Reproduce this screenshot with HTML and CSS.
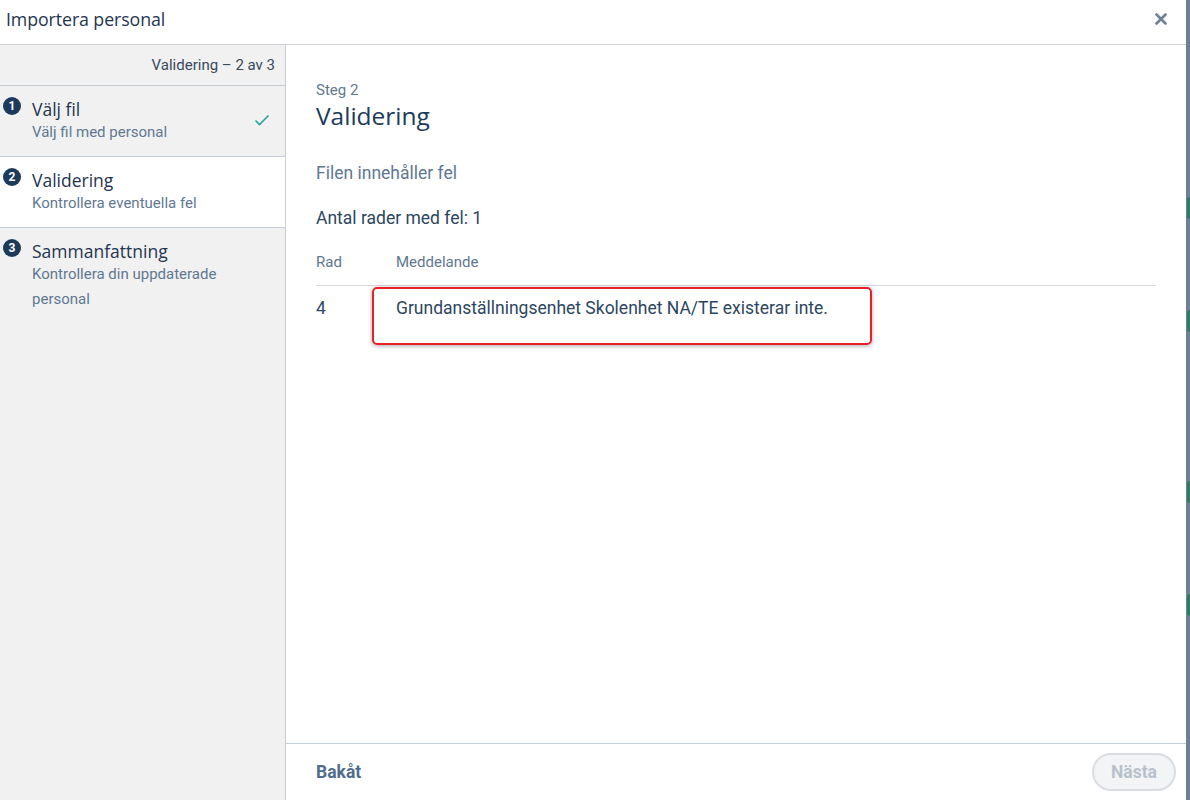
FILE: index.html
```html
<!DOCTYPE html>
<html lang="sv">
<head>
    <meta charset="UTF-8">
    <meta name="viewport" content="width=device-width, initial-scale=1.0">
    <title>Importera personal</title>
    <link rel="stylesheet" href="styles.css">
</head>
<body>
    <div class="backdrop">
        <span class="bit bit-1"></span>
        <span class="bit bit-2"></span>
        <span class="bit bit-3"></span>
        <span class="bit bit-4"></span>
    </div>

    <div class="dialog">
        <div class="dialog-head">
            <h1 class="dialog-title">Importera personal</h1>
            <span class="close">
                <svg width="12" height="12" viewBox="0 0 12 12">
                    <path d="M1.5 1.5 L10.5 10.5 M10.5 1.5 L1.5 10.5" stroke="#6c8199" stroke-width="2.6" stroke-linecap="round"/>
                </svg>
            </span>
        </div>

        <div class="dialog-body">
            <aside class="steps">
                <div class="steps-info">Validering &ndash; 2 av 3</div>

                <div class="step done">
                    <span class="num">1</span>
                    <div class="step-text">
                        <div class="step-title">Välj fil</div>
                        <div class="step-sub">Välj fil med personal</div>
                    </div>
                    <svg class="check" width="16" height="12" viewBox="0 0 16 12">
                        <path d="M1.5 6.5 L5.5 10.5 L14.5 1.5" fill="none" stroke="#2aa39a" stroke-width="1.6"/>
                    </svg>
                </div>
                <div class="step active">
                    <span class="num">2</span>
                    <div class="step-text">
                        <div class="step-title">Validering</div>
                        <div class="step-sub">Kontrollera eventuella fel</div>
                    </div>
                </div>
                <div class="step last">
                    <span class="num">3</span>
                    <div class="step-text">
                        <div class="step-title">Sammanfattning</div>
                        <div class="step-sub">Kontrollera din uppdaterade personal</div>
                    </div>
                </div>
            </aside>

            <main class="main">
                <div class="content">
                    <div class="kicker">Steg 2</div>
                    <h2 class="heading">Validering</h2>

                    <p class="status">Filen innehåller fel</p>
                    <p class="count">Antal rader med fel: 1</p>

                    <div class="errors">
                        <div class="errors-head">
                            <span class="col-row">Rad</span>
                            <span class="col-msg">Meddelande</span>
                        </div>
                        <div class="errors-row">
                            <span class="col-row">4</span>
                            <span class="col-msg">Grundanställningsenhet Skolenhet NA/TE existerar inte.</span>
                            <span class="mark"></span>
                        </div>
                    </div>
                </div>

                <div class="footer">
                    <span class="back">Bakåt</span>
                    <button class="next" disabled>Nästa</button>
                </div>
            </main>
        </div>
    </div>
</body>
</html>
```

FILE: styles.css
```css
html, body {
    margin: 0;
    height: 100%;
}
body {
    background: #6e8096;
    font-family: Roboto, "Liberation Sans", sans-serif;
    color: #2c4660;
    overflow: hidden;
    position: relative;
}
.backdrop .bit {
    position: absolute;
    right: 0;
    width: 3px;
    height: 22px;
    border-radius: 3px 0 0 3px;
    background: #2f7a66;
}
.bit-1 { top: 197px; }
.bit-2 { top: 310px; }
.bit-3 { top: 481px; }
.bit-4 { top: 594px; }

.dialog {
    width: 1186px;
    height: 800px;
    background: #fff;
    display: flex;
    flex-direction: column;
}
.dialog-head {
    height: 44px;
    border-bottom: 1px solid #cfd3d8;
    display: flex;
    align-items: center;
    justify-content: space-between;
    padding: 0 19px 0 6px;
    flex-shrink: 0;
}
.dialog-title {
    margin: -6px 0 0;
    font-family: "Open Sans", sans-serif;
    font-weight: 400;
    font-size: 17.8px;
    color: #1f3550;
    letter-spacing: -0.1px;
}
.close {
    display: flex;
    margin-top: -6px;
}

.dialog-body {
    flex: 1;
    display: flex;
    min-height: 0;
}

/* steps */
.steps {
    width: 285px;
    background: #f1f1f1;
    border-right: 1px solid #c6ccd3;
    flex-shrink: 0;
}
.steps-info {
    height: 40px;
    border-bottom: 1px solid #c6ccd3;
    text-align: right;
    padding-right: 10px;
    font-size: 15px;
    line-height: 40px;
    color: #3a4a5c;
}
.step {
    display: flex;
    align-items: flex-start;
    padding: 12px 15px 11px 3px;
    border-bottom: 1px solid #c6ccd3;
}
.step.active {
    background: #fff;
}
.step.last {
    border-bottom: none;
}
.num {
    width: 18px;
    height: 18px;
    border-radius: 50%;
    background: #1c3b5a;
    color: #fff;
    font-size: 12px;
    font-weight: 700;
    line-height: 18px;
    text-align: center;
    flex-shrink: 0;
    margin-top: -1px;
}
.step-text {
    flex: 1;
    margin-left: 11px;
}
.step-title {
    font-family: "Open Sans", sans-serif;
    font-size: 17.5px;
    line-height: 22px;
    color: #1f3550;
}
.step-sub {
    font-size: 15px;
    line-height: 25px;
    color: #5f7891;
    padding-right: 30px;
}
.check {
    margin-top: 16px;
}

/* main */
.main {
    flex: 1;
    display: flex;
    flex-direction: column;
    min-width: 0;
}
.content {
    flex: 1;
    padding: 36px 30px 0 30px;
}
.kicker {
    font-size: 15px;
    color: #5f7891;
    line-height: 18px;
}
.heading {
    margin: 1px 0 0;
    font-family: "Open Sans", sans-serif;
    font-weight: 400;
    font-size: 24.5px;
    line-height: 32px;
    color: #1c3b5a;
}
.status {
    margin: 29px 0 0;
    font-size: 17.5px;
    line-height: 24px;
    color: #5f7891;
}
.count {
    margin: 21px 0 0;
    font-size: 17.5px;
    line-height: 24px;
    color: #2c4660;
}
.errors {
    margin-top: 11px;
}
.errors-head {
    display: flex;
    height: 45px;
    align-items: center;
    border-bottom: 1px solid #d6dadf;
    font-size: 15px;
    color: #5f7891;
    padding-bottom: 2px;
    box-sizing: border-box;
}
.errors-row {
    display: flex;
    position: relative;
    padding-top: 11px;
    font-size: 17.5px;
    line-height: 22px;
    color: #2c4660;
}
.col-row {
    width: 80px;
    flex-shrink: 0;
}
.mark {
    position: absolute;
    left: 56px;
    top: 1px;
    width: 496px;
    height: 54px;
    border: 2px solid #e8202a;
    border-radius: 5px;
    box-shadow: 0 1px 4px rgba(0, 0, 0, 0.35);
}

.footer {
    height: 56px;
    border-top: 1px solid #c6ccd3;
    display: flex;
    align-items: center;
    justify-content: space-between;
    padding: 0 10px 0 30px;
    flex-shrink: 0;
}
.back {
    font-size: 17.5px;
    font-weight: 700;
    color: #4f6d8a;
}
.next {
    width: 84px;
    height: 38px;
    border: 2px solid #d9dde2;
    border-radius: 19px;
    background: #f3f4f6;
    font-family: Roboto, sans-serif;
    font-size: 17.5px;
    font-weight: 700;
    color: #b9c2cc;
}
```
